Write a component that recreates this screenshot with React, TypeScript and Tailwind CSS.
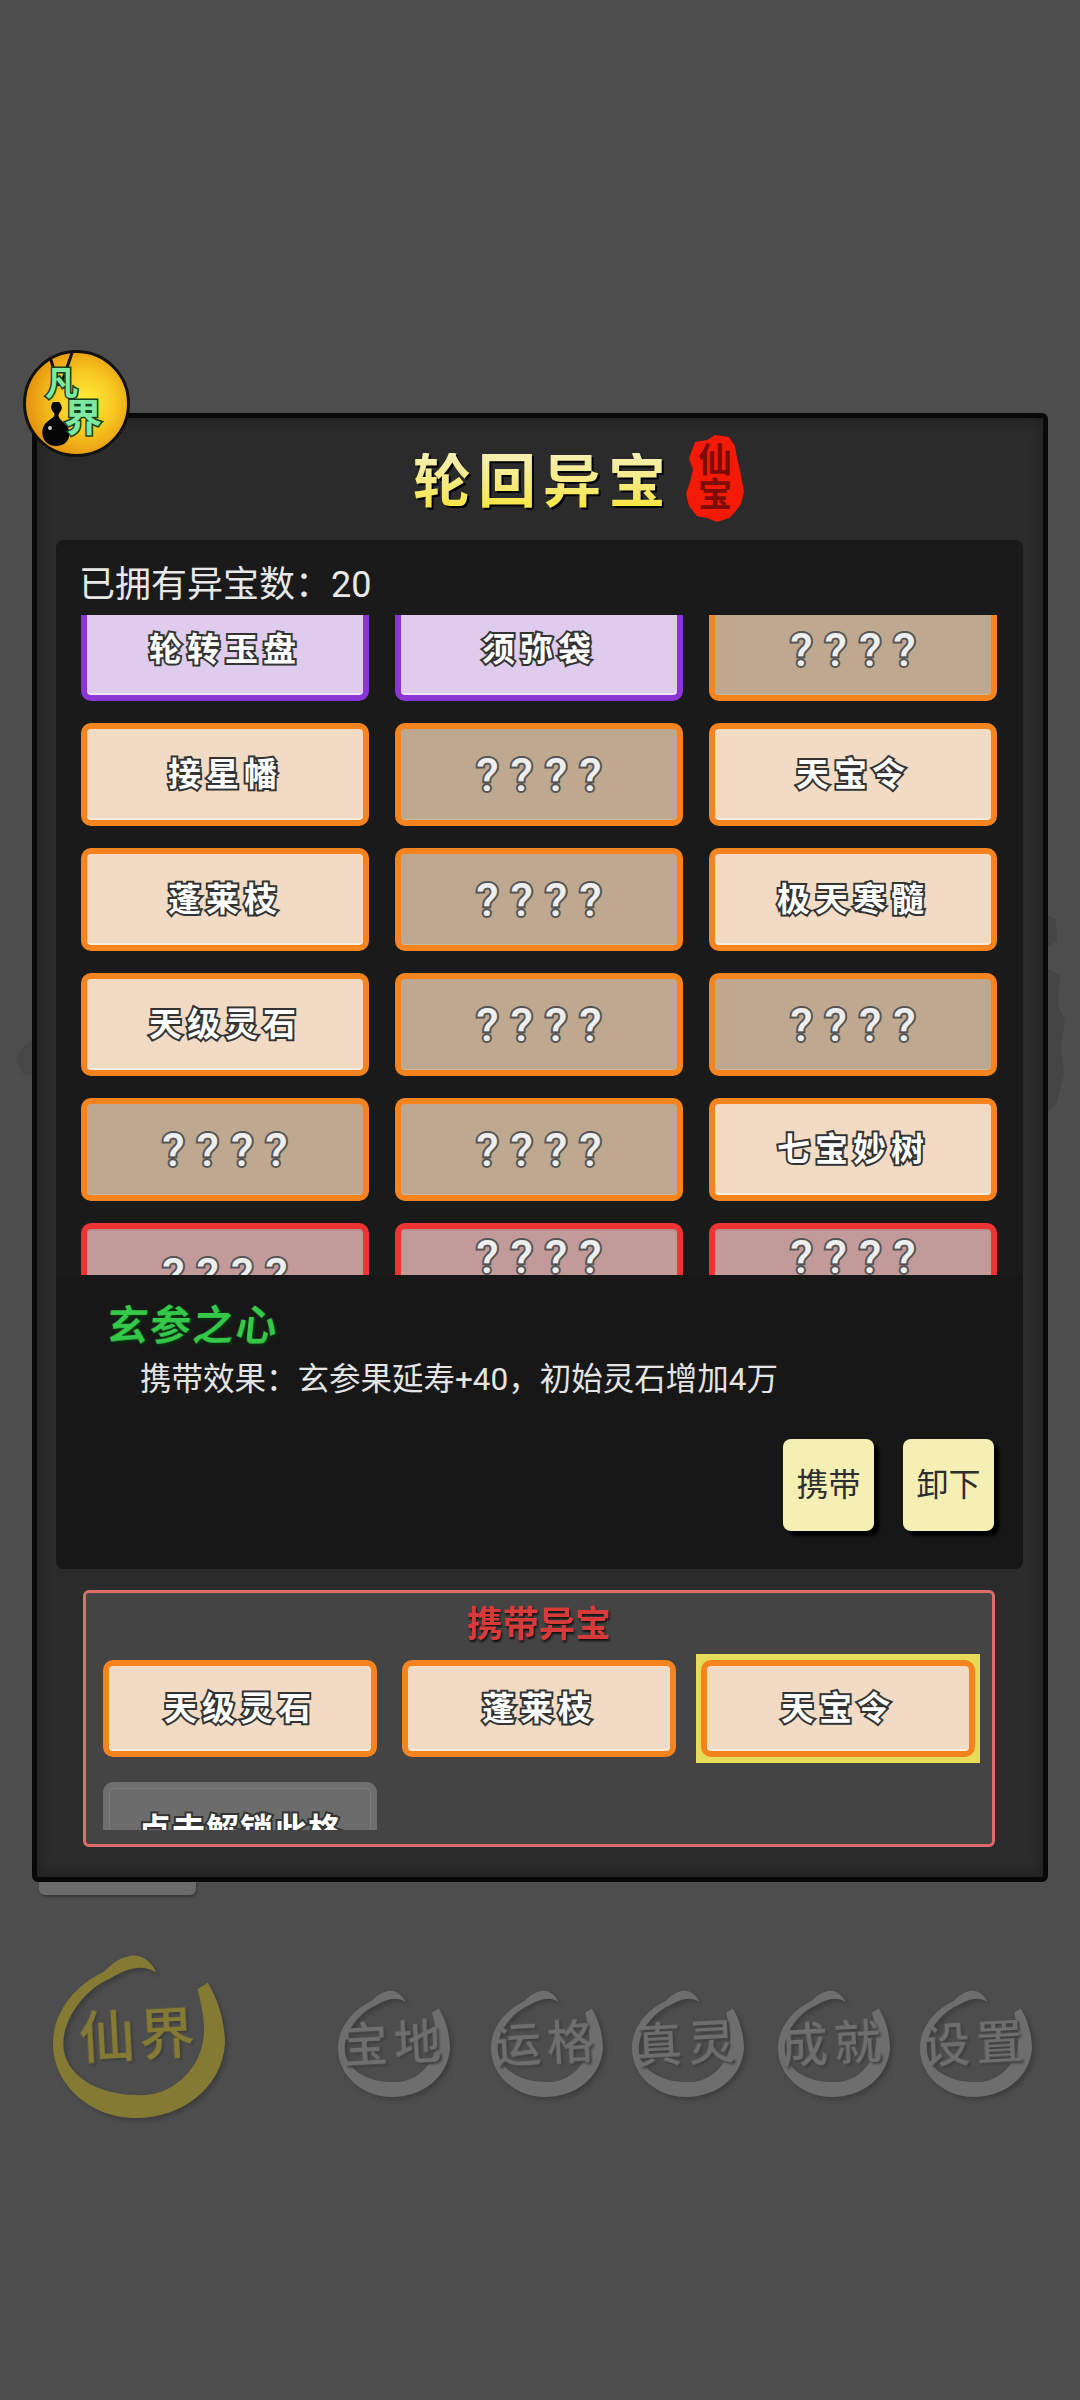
import React from 'react';

type Kind = 'purple' | 'orange' | 'locked' | 'red' | 'gray';

interface Treasure {
  label: string;
  kind: Kind;
  up?: boolean;
}

const CELL_STYLES: Record<Kind, string> = {
  purple: 'border-[#8b35d6] bg-[#dfcbec] shadow-[inset_0_-2px_0_#efe4f6]',
  orange: 'border-[#f5841f] bg-[#f1dbc4] shadow-[inset_0_-2px_0_#f9ecdd]',
  locked: 'border-[#f5841f] bg-[#bea88f] shadow-[inset_0_-1px_0_#cdb9a1]',
  red: 'border-[#ee3333] bg-[#c29a9a] shadow-[inset_0_2px_0_#b58f8f]',
  gray: 'border-[#6f6f6f] bg-[#6c6c6c] shadow-[inset_0_0_0_1px_#7c7c7c]',
};

const Q = '????';

const TREASURES: Treasure[] = [
  { label: '轮转玉盘', kind: 'purple' },
  { label: '须弥袋', kind: 'purple' },
  { label: Q, kind: 'locked' },
  { label: '接星幡', kind: 'orange' },
  { label: Q, kind: 'locked' },
  { label: '天宝令', kind: 'orange' },
  { label: '蓬莱枝', kind: 'orange' },
  { label: Q, kind: 'locked' },
  { label: '极天寒髓', kind: 'orange' },
  { label: '天级灵石', kind: 'orange' },
  { label: Q, kind: 'locked' },
  { label: Q, kind: 'locked' },
  { label: Q, kind: 'locked' },
  { label: Q, kind: 'locked' },
  { label: '七宝妙树', kind: 'orange' },
  { label: Q, kind: 'red' },
  { label: Q, kind: 'red', up: true },
  { label: Q, kind: 'red', up: true },
];

const NAV = [
  { label: '宝地', ml: 'ml-[113px]' },
  { label: '运格', ml: 'ml-[41px]' },
  { label: '真灵', ml: 'ml-[29px]' },
  { label: '成就', ml: 'ml-[34px]' },
  { label: '设置', ml: 'ml-[30px]' },
];

const RING =
  'M60 12C58 5 50 0 44 2C38 3 33 8 30 11C12 20 0 36 0 55C0 80 22 100 48 100C75 100 98 82 100 55C100 42 96 28 90 18L84 22C87 34 89 44 87 55C83 74 66 88 48 86C26 86 6 74 6 55C6 40 18 22 34 15C42 10 52 6 60 12Z';

function InkLabel({ text, up }: { text: string; up?: boolean }) {
  if (text === Q) {
    return (
      <span
        className={`pl-[12px] text-[46px] leading-none font-medium tracking-[12px] text-[#eeeeee] [-webkit-text-stroke:4px_#555555] [paint-order:stroke_fill] ${
          up ? '-translate-y-[18px]' : ''
        }`}
      >
        {text}
      </span>
    );
  }
  return (
    <span
      className={`text-[33px] leading-none font-bold text-white [-webkit-text-stroke:4px_#333333] [paint-order:stroke_fill] ${
        text.length > 4 ? 'tracking-[1px]' : 'tracking-[5px]'
      }`}
    >
      {text}
    </span>
  );
}

function Cell({ item }: { item: Treasure }) {
  return (
    <div className={`flex h-[103px] items-center justify-center rounded-[10px] border-[6px] ${CELL_STYLES[item.kind]}`}>
      <InkLabel text={item.label} up={item.up} />
    </div>
  );
}

function EquipCell({ item }: { item: Treasure }) {
  return (
    <div className={`flex h-[97px] items-center justify-center rounded-[10px] border-[6px] ${CELL_STYLES[item.kind]}`}>
      <InkLabel text={item.label} />
    </div>
  );
}

function Emblem() {
  return (
    <div className="absolute -top-[68px] -left-[14px] h-[107px] w-[107px] rounded-full border-[3px] border-[#111] bg-[radial-gradient(circle_at_58%_48%,#fdee38_0%,#f8c821_38%,#e6960f_72%)]">
      <svg viewBox="0 0 107 107" className="absolute -inset-[3px] h-[107px] w-[107px]">
        <path d="M27 7L36 36M49 3L39 32" stroke="#111" strokeWidth="3" fill="none" />
        <path d="M30 52C27 56 28 60 31 63C33 67 28 68 24 72C16 78 18 96 33 96C48 96 50 80 41 73C36 68 34 66 37 62C40 59 39 55 36 52Z" fill="#050505" />
        <circle cx="27" cy="78" r="2" fill="#ccc" />
      </svg>
      <span className="absolute top-[14px] left-[19px] text-[33px] leading-none font-bold text-[#7fe8a2] [-webkit-text-stroke:3px_#16401f] [paint-order:stroke_fill]">
        凡
      </span>
      <span className="absolute top-[46px] left-[38px] text-[38px] leading-none font-bold text-[#7fe8a2] [-webkit-text-stroke:3px_#16401f] [paint-order:stroke_fill]">
        界
      </span>
    </div>
  );
}

function Seal() {
  return (
    <div className="relative -mt-[2px] ml-[12px] flex h-[89px] w-[60px] flex-col items-center justify-center">
      <svg viewBox="0 0 60 89" className="absolute inset-0 h-full w-full">
        <path
          d="M10 8L22 6L30 1L44 3L50 12L52 24L55 36L58 52L59 58L56 70L50 78L44 84L32 88L22 84L12 82L4 72L1 60L5 48L8 36L4 24Z"
          fill="#f41a08"
        />
      </svg>
      <span className="relative text-[34px] leading-[35px] font-bold text-[#7d0c06]">仙</span>
      <span className="relative text-[34px] leading-[35px] font-bold text-[#7d0c06]">宝</span>
    </div>
  );
}

function InkRing({ label, big }: { label: string; big?: boolean }) {
  return (
    <div className={`relative flex items-center justify-center ${big ? 'h-[165px] w-[172px]' : 'h-[108px] w-[112px]'}`}>
      <svg viewBox="0 0 100 100" preserveAspectRatio="none" className="absolute inset-0 h-full w-full [filter:drop-shadow(3px_3px_2px_#3e3e3e)]">
        <path d={RING} fill={big ? '#857a33' : '#6e6e6e'} />
      </svg>
      <span
        className={`relative -rotate-3 leading-none font-medium whitespace-nowrap [filter:drop-shadow(2px_2px_1px_#3e3e3e)] ${
          big ? 'text-[56px] tracking-[4px] text-[#857a33]' : 'text-[47px] tracking-[6px] text-[#6e6e6e]'
        }`}
      >
        {label}
      </span>
    </div>
  );
}

export default function App() {
  return (
    <div className="h-[2400px] w-[1080px] overflow-hidden bg-[#4d4d4d] pt-[413px] [font-family:Roboto,'Noto_Sans_CJK_SC',sans-serif]">
      <div className="relative ml-[32px] h-[1469px] w-[1016px] rounded-md border-[5px] border-[#080808] bg-[#2b2b2b] shadow-[inset_0_0_14px_#1e1e1e]">
        <Emblem />

        {/* faint shapes of the dimmed page showing past the panel */}
        <svg viewBox="0 0 18 200" className="absolute top-[497px] -right-[23px] h-[200px] w-[18px]">
          <path d="M0 0L8 4L9 26L0 32ZM0 54L12 60L10 90L17 106L13 130L16 160L8 190L0 196Z" fill="#454545" />
        </svg>
        <svg viewBox="0 0 16 36" className="absolute top-[622px] -left-[21px] h-[36px] w-[16px]">
          <path d="M16 0L6 8L0 18L6 34L16 36Z" fill="#474747" />
        </svg>

        <div className="flex h-[122px] items-center pl-[376px]">
          <h1 className="mt-[6px] bg-gradient-to-b from-[#f4efb4] to-[#f8e42a] bg-clip-text text-[58px] leading-none font-bold tracking-[7px] text-transparent [filter:drop-shadow(2px_2px_0_#000)]">
            轮回异宝
          </h1>
          <Seal />
        </div>

        <section className="mx-[19px] h-[1029px] w-[967px] rounded-lg bg-[#1a1a1a]">
          <div className="flex h-[75px] items-center pt-[14px] pl-[23px] text-[36px] text-[#e8e8e8]">已拥有异宝数：20</div>

          <div className="h-[660px] overflow-hidden px-[25px]">
            <div className="-mt-[17px] grid grid-cols-[288px_288px_288px] gap-x-[26px] gap-y-[22px]">
              {TREASURES.map((item, i) => (
                <Cell key={i} item={item} />
              ))}
            </div>
          </div>

          <div className="h-[294px] rounded-b-lg bg-[#171717] pt-[26px]">
            <h2 className="ml-[51px] -skew-x-6 text-[41px] leading-[50px] font-bold tracking-[2px] text-[#35c94a] [filter:drop-shadow(2px_2px_1px_#04310c)]">
              玄参之心
            </h2>
            <p className="mt-[11px] ml-[84px] text-[31.5px] leading-[36px] text-[#e4e4e4]">
              携带效果：玄参果延寿+40，初始灵石增加4万
            </p>
            <div className="mt-[41px] mr-[29px] flex justify-end gap-[29px]">
              <button className="flex h-[92px] w-[91px] items-center justify-center rounded-lg bg-[#f5efb4] text-[32px] text-[#2e2e2e] shadow-[5px_5px_3px_#000]">
                携带
              </button>
              <button className="flex h-[92px] w-[91px] items-center justify-center rounded-lg bg-[#f5efb4] text-[32px] text-[#2e2e2e] shadow-[5px_5px_3px_#000]">
                卸下
              </button>
            </div>
          </div>
        </section>

        <section className="mt-[21px] ml-[46px] h-[257px] w-[912px] rounded-md border-[3px] border-[#e06b6b] bg-[#444444]">
          <h3 className="flex h-[57px] items-center justify-center pt-[6px] text-[36px] font-bold text-[#d83a3a] [filter:drop-shadow(1px_2px_1px_#111)]">
            携带异宝
          </h3>
          <div className="h-[180px] overflow-hidden px-[17px] pt-[10px]">
            <div className="grid grid-cols-[274px_274px_274px] gap-x-[25px] gap-y-[25px]">
              <EquipCell item={{ label: '天级灵石', kind: 'orange' }} />
              <EquipCell item={{ label: '蓬莱枝', kind: 'orange' }} />
              <div className="-mx-[5px] -my-[6px] bg-[#e6dc58] px-[5px] py-[6px]">
                <EquipCell item={{ label: '天宝令', kind: 'orange' }} />
              </div>
              <EquipCell item={{ label: '点击解锁此格', kind: 'gray' }} />
            </div>
          </div>
        </section>
      </div>

      <div className="ml-[39px] h-[13px] w-[157px] rounded-b-md bg-[#6b6b6b] shadow-[1px_2px_2px_#3a3a3a]" />

      <nav className="mt-[58px] flex items-start pl-[53px]">
        <InkRing label="仙界" big />
        {NAV.map((n) => (
          <div key={n.label} className={`mt-[36px] ${n.ml}`}>
            <InkRing label={n.label} />
          </div>
        ))}
      </nav>
    </div>
  );
}
